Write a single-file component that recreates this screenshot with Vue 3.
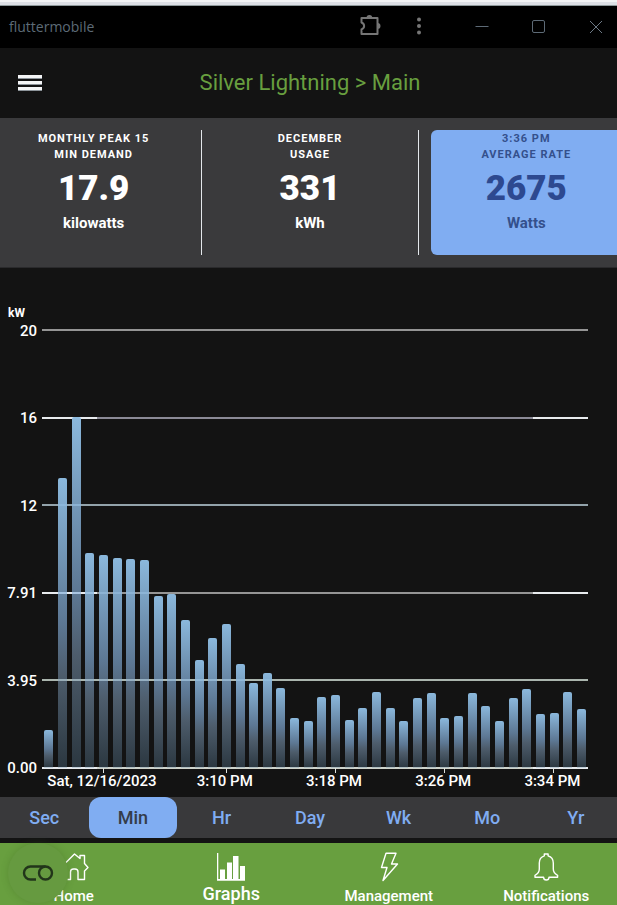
<script setup>
const stats = [
  { label: ['Monthly peak 15', 'min demand'], value: '17.9', unit: 'kilowatts' },
  { label: ['December', 'usage'], value: '331', unit: 'kWh' },
  { label: ['3:36 PM', 'average rate'], value: '2675', unit: 'Watts', active: true }
]

const yTicks = [
  { text: '20', tone: 'grey' },
  { text: '16', tone: 'violet', bright: true },
  { text: '12', tone: 'steel' },
  { text: '7.91', tone: 'grey', bright: true },
  { text: '3.95', tone: 'pale' },
  { text: '0.00', tone: 'base', bright: true }
]

const yMax = 19.78
const readings = [
  1.72, 13.11, 15.84, 9.73, 9.6, 9.5, 9.43, 9.38, 7.79, 7.84,
  6.68, 4.87, 5.88, 6.5, 4.68, 3.84, 4.29, 3.61, 2.25, 2.13,
  3.22, 3.28, 2.19, 2.7, 3.44, 2.7, 2.13, 3.16, 3.39, 2.25,
  2.35, 3.39, 2.81, 2.13, 3.16, 3.55, 2.42, 2.48, 3.44, 2.65
]

const xTicks = [
  { slot: 5, text: 'Sat, 12/16/2023' },
  { slot: 14, text: '3:10 PM' },
  { slot: 22, text: '3:18 PM' },
  { slot: 30, text: '3:26 PM' },
  { slot: 38, text: '3:34 PM' }
]

const ranges = ['Sec', 'Min', 'Hr', 'Day', 'Wk', 'Mo', 'Yr']
const barHeight = (v) => `${(v / yMax) * 100}%`
</script>

<template>
  <div class="window">
    <div class="desktop-edge"></div>
    <div class="titlebar">
      <span class="app-name">fluttermobile</span>
      <div class="window-tools">
        <button type="button" aria-label="Extensions">
          <svg width="24" height="24" viewBox="0 0 24 24">
            <path d="M2.500 4h16v16h-16v-4.500c3.500-1.500 3.500-5.500 0-7z" fill="none" stroke="#767676" stroke-width="2" stroke-linejoin="round" />
            <path d="M7.500 4a2.900 2.900 0 0 1 5.800 0zM18.600 9a2.900 2.900 0 0 1 0 5.800z" fill="#767676" />
          </svg>
        </button>
        <button type="button" aria-label="More options">
          <svg width="24" height="24" viewBox="0 0 24 24" fill="#767676">
            <circle cx="12" cy="5.600" r="2" /><circle cx="12" cy="12" r="2" /><circle cx="12" cy="18.400" r="2" />
          </svg>
        </button>
      </div>
      <div class="window-controls">
        <button type="button" aria-label="Minimize">
          <svg width="14" height="14" viewBox="0 0 14 14"><path d="M0.500 6.500h13" stroke="#5d6a76" /></svg>
        </button>
        <button type="button" aria-label="Maximize">
          <svg width="14" height="14" viewBox="0 0 14 14"><rect x="0.500" y="0.500" width="12" height="12" rx="1.500" fill="none" stroke="#5d6a76" /></svg>
        </button>
        <button type="button" aria-label="Close">
          <svg width="14" height="14" viewBox="0 0 14 14"><path d="M1 1l12 12M13 1L1 13" stroke="#6d7a86" /></svg>
        </button>
      </div>
    </div>

    <main class="page">
      <header class="app-header">
        <button type="button" class="menu" aria-label="Menu"><i></i><i></i><i></i></button>
        <h1>Silver Lightning &gt; Main</h1>
      </header>

      <section class="stats">
        <div class="stats-row">
          <button v-for="s in stats" :key="s.value" type="button" class="stat" :class="{ active: s.active }">
            <span v-for="line in s.label" :key="line" class="stat-label">{{ line }}</span>
            <strong>{{ s.value }}</strong>
            <span class="stat-unit">{{ s.unit }}</span>
          </button>
        </div>
      </section>

      <section class="chart">
        <div class="chart-unit">kW</div>
        <div class="y-axis">
          <span v-for="t in yTicks" :key="t.text">{{ t.text }}</span>
        </div>
        <div class="plot">
          <div class="lines">
            <i v-for="t in yTicks" :key="t.text" :class="[t.tone, { bright: t.bright }]"></i>
          </div>
          <div class="bars">
            <div v-for="(v, i) in readings" :key="i" class="slot">
              <div class="bar" :style="{ height: barHeight(v) }"></div>
            </div>
          </div>
        </div>
        <div class="x-axis">
          <div v-for="t in xTicks" :key="t.text" class="x-tick" :style="{ gridColumn: t.slot }">
            <span>{{ t.text }}</span>
          </div>
        </div>
      </section>

      <div class="ranges">
        <button v-for="r in ranges" :key="r" type="button" :class="{ active: r === 'Min' }">{{ r }}</button>
      </div>
    </main>

    <nav class="tabs">
      <a href="#home">
        <svg width="32" height="30" viewBox="0 0 32 30" fill="none" stroke="#fff" stroke-width="1.400" stroke-linejoin="round">
          <path d="M9.500 27.500H12.500V20a3 3 0 0 1 3-3H17a3 3 0 0 1 3 3v7.500h6.500V19l3.500-3.500-3.500-4V3.500h-4.500v3L16.500 2 8 10.500" />
        </svg>
        <span>Home</span>
      </a>
      <a href="#graphs" class="current">
        <svg width="32" height="30" viewBox="0 0 32 30" fill="#fff">
          <path d="M2 1h1.300v27H2zM5 17.500h5V28H5zM12 10.500h5V28h-5zM18 4h5.500v24H18zM25 14h5v14h-5zM2 27h28v1.700H2z" />
        </svg>
        <span>Graphs</span>
      </a>
      <a href="#management">
        <svg width="32" height="30" viewBox="0 0 32 30" fill="none" stroke="#fff" stroke-width="1.400" stroke-linejoin="round">
          <path d="M13 1.200h10L18.500 12h6L10 28.500l4-13H8.500z" />
        </svg>
        <span>Management</span>
      </a>
      <a href="#notifications">
        <svg width="32" height="30" viewBox="0 0 32 30" fill="none" stroke="#fff" stroke-width="1.400" stroke-linejoin="round">
          <path d="M14.300 3.800V2h3.800v1.800C21.500 4.800 23.300 7.500 23.300 11v6c0 3.500 1.700 5 4.300 6.300v1.900H19c0 2-1 2.800-2.700 2.800S13.600 27.200 13.600 25.200H5v-1.900C7.600 22 9.300 20.500 9.300 17v-6c0-3.500 1.800-6.200 5-7.200z" />
        </svg>
        <span>Notifications</span>
      </a>
    </nav>

    <button type="button" class="float-toggle" aria-label="Toggle panel">
      <svg width="32" height="18" viewBox="0 0 32 18" fill="none" stroke="#22351a" stroke-width="2.400">
        <path d="M14 15.500H8.500a6.500 6.500 0 0 1 0-13h15" /><circle cx="23.500" cy="9" r="6.500" />
      </svg>
    </button>
  </div>
</template>

<style>
body { background: #131313; overflow: hidden; }
</style>

<style scoped>
* { box-sizing: border-box; }
button { font: inherit; color: inherit; background: none; border: 0; padding: 0; cursor: pointer; }
svg { display: block; flex: none; }

.window {
  position: relative;
  display: flex;
  flex-direction: column;
  min-height: 100vh;
  overflow: hidden;
  background: #131313;
  color: #fff;
  font-family: Roboto, sans-serif;
}
.desktop-edge { height: 6px; background: linear-gradient(#f3f4f6 2px, #dde0e6 2px 5px, #8f9a9c 5px); }

.titlebar {
  display: flex;
  align-items: center;
  height: 42px;
  padding: 0 14px 0 9px;
  background: #000;
}
.app-name { flex: 1; color: #5d6b77; font: 14px/20px "Open Sans", sans-serif; }
.window-tools { display: flex; gap: 24px; margin-right: 44px; padding-bottom: 3px; }
.window-controls { display: flex; gap: 43px; }

.page { width: calc(100% + 3px); }

.app-header {
  display: grid;
  grid-template-columns: 24px 1fr 24px;
  align-items: center;
  height: 70px;
  padding: 0 18px;
}
.menu { display: flex; flex-direction: column; gap: 2px; }
.menu i { width: 24px; height: 4px; background: #f4f5f6; border-bottom: 1px solid #8c9399; }
h1 { margin: 0; font-size: 22px; line-height: 28px; font-weight: 400; color: #689f3f; text-align: center; }

.stats { overflow: hidden; padding: 12px 0; background: #3a3a3c; border-bottom: 1px solid #2a2a2c; }
.stats-row { display: flex; gap: 25px; margin: 0 -2px; }
.stat {
  position: relative;
  flex: 1 1 0;
  display: flex;
  flex-direction: column;
  align-items: center;
  height: 125px;
  padding-top: 1px;
  border-radius: 6px;
  font-weight: 700;
}
.stat + .stat::before {
  content: "";
  position: absolute;
  left: -13px;
  top: 0;
  bottom: 0;
  width: 1px;
  background: #e4e8ec;
}
.stat-label { font-size: 11px; line-height: 16px; letter-spacing: 1px; text-transform: uppercase; }
.stat strong { font-size: 35px; line-height: 52px; }
.stat-unit { font-size: 15px; line-height: 16px; }
.stat.active { background: #80adf2; color: #2d4990; }
.stat.active .stat-label, .stat.active .stat-unit { color: #34508c; }

.chart {
  display: grid;
  grid-template-columns: 42px 1fr;
  grid-template-rows: auto 438px auto;
  padding: 36px 32px 0 0;
}
.chart-unit { grid-column: 1 / -1; height: 26px; padding-left: 8px; font-size: 12px; line-height: 18px; font-weight: 700; }
.y-axis {
  display: flex;
  flex-direction: column;
  justify-content: space-between;
  margin: -7px 0 -8px;
  padding-right: 5px;
  text-align: right;
  font-size: 15px;
  line-height: 16px;
  font-weight: 500;
}
.plot { display: grid; }
.lines, .bars { grid-area: 1 / 1; }
.lines { display: flex; flex-direction: column; justify-content: space-between; }
.lines i { --tone: #959595; height: 2px; margin: -1px 0; background: var(--tone); }
.lines .violet { --tone: #8b8a96; }
.lines .steel { --tone: #93a3ab; }
.lines .pale { --tone: #aab5ae; }
.lines .base { --tone: #cfd3cb; }
.lines .bright { background: linear-gradient(90deg, #e8ebee 10%, var(--tone) 10% 90%, #e8ebee 90%); }
.bars { display: flex; }
.slot { flex: 1; display: flex; align-items: flex-end; justify-content: center; }
.bar {
  width: 66%;
  border-radius: 2px 2px 0 0;
  background: linear-gradient(
    rgba(141, 187, 224, 0.98),
    rgba(134, 176, 220, 0.64) 50%,
    rgba(135, 165, 195, 0.5) 68%,
    rgba(99, 139, 169, 0.3)
  );
}
.x-axis {
  grid-column: 2;
  display: grid;
  grid-template-columns: repeat(40, 1fr);
  height: 29px;
  font-size: 15px;
  line-height: 16px;
  font-weight: 500;
}
.x-tick {
  display: flex;
  flex-direction: column;
  align-items: center;
  min-width: 0;
  white-space: nowrap;
}
.x-tick::before { content: ""; flex: none; width: 1px; height: 5px; background: #e0e3e0; }
.x-tick span { padding-right: 3px; }

.ranges { display: flex; height: 41px; background: #39393b; }
.ranges button { flex: 1; border-radius: 12px; font-size: 18px; font-weight: 500; color: #80adf2; }
.ranges .active { background: #80adf2; color: #343c4a; }

.tabs {
  flex: 1;
  display: flex;
  min-height: 62px;
  margin: 5px -8px 0 -5px;
  background: #689f3f;
}
.tabs a {
  flex: 1;
  display: flex;
  flex-direction: column;
  align-items: center;
  height: 62px;
  padding-top: 9px;
  color: #fff;
  font-size: 15px;
  line-height: 28px;
  font-weight: 500;
  text-decoration: none;
}
.tabs .current { font-size: 18px; line-height: 24px; }

.float-toggle {
  position: absolute;
  left: 8px;
  bottom: 2px;
  display: grid;
  place-items: center;
  width: 60px;
  height: 60px;
  border-radius: 50%;
  background: #669a40;
  box-shadow: 0 0 7px rgba(60, 100, 30, 0.3);
}
</style>
